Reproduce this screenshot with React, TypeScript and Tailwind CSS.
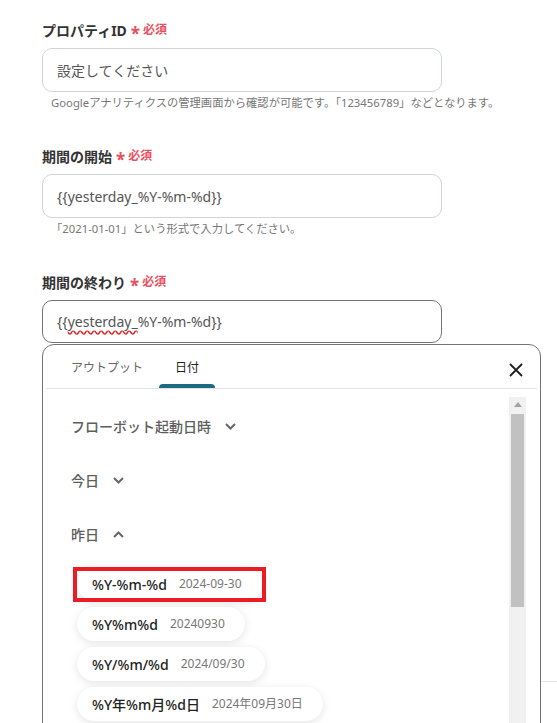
import React from "react";

const font = "font-['Noto_Sans','Noto_Sans_CJK_JP',sans-serif]";

function Required() {
  return (
    <span className="ml-[4px] inline-flex items-center text-[#e9505e]">
      <span className="text-[17px] font-bold leading-none translate-y-[3px]">*</span>
      <span className="ml-[3px] text-[12px] font-bold">必須</span>
    </span>
  );
}

function Label({ children }: { children: React.ReactNode }) {
  return (
    <div className="flex items-center h-[20px] text-[14px] font-bold text-[#333]">
      {children}
      <Required />
    </div>
  );
}

function Chevron({ up = false }: { up?: boolean }) {
  return (
    <svg width="11" height="7" viewBox="0 0 11 7" className="ml-[14px]">
      <polyline
        points={up ? "1,6 5.5,1.5 10,6" : "1,1 5.5,5.5 10,1"}
        fill="none"
        stroke="#666"
        strokeWidth="2"
      />
    </svg>
  );
}

const formats = [
  { f: "%Y-%m-%d", v: "2024-09-30" },
  { f: "%Y%m%d", v: "20240930" },
  { f: "%Y/%m/%d", v: "2024/09/30" },
  { f: "%Y年%m月%d日", v: "2024年09月30日" },
];

function Pill({ f, v, marked }: { f: string; v: string; marked?: boolean }) {
  return (
    <div className="relative self-start">
      <div className="flex items-center h-[34px] pl-[15px] pr-[20px] rounded-full bg-white shadow-[0_2px_8px_rgba(0,0,0,0.11)]">
        <span className="text-[14px] font-medium text-[#222]">{f}</span>
        <span className="ml-[12px] text-[12px] text-[#777]">{v}</span>
      </div>
      {marked && (
        <div className="absolute left-[-4px] top-[0px] w-[193px] h-[35px] border-[4px] border-[#ec1c24]" />
      )}
    </div>
  );
}

function DatePanel() {
  return (
    <div className="absolute left-0 top-full mt-[1px] w-[499px] h-[400px] bg-white border border-[#747474] rounded-t-[12px] flex flex-col">
      <div className="flex items-stretch h-[43px] pl-[12px] pr-[16px]">
        <div className="flex flex-col px-4">
          <div className="flex-1 flex items-center pt-[6px] text-[12px] text-[#666]">アウトプット</div>
          <div className="h-[4px]" />
        </div>
        <div className="flex flex-col w-[56px]">
          <div className="flex-1 flex items-center justify-center pt-[6px] text-[12px] text-[#222]">日付</div>
          <div className="h-[4px] rounded-t-[4px] bg-[#1c6b80]" />
        </div>
        <div className="ml-auto flex items-center pt-[6px] pr-[1px]">
          <svg width="14" height="14" viewBox="0 0 14 14">
            <path d="M1 1 L13 13 M13 1 L1 13" stroke="#1f1f1f" strokeWidth="1.8" />
          </svg>
        </div>
      </div>
      <div className="mx-[3px] h-px bg-[#e2e2e2]" />
      <div className="flex flex-1 min-h-0">
        <div className="flex-1 flex flex-col pl-[28px] pt-[10px]">
          {[
            { t: "フローボット起動日時", up: false },
            { t: "今日", up: false },
            { t: "昨日", up: true },
          ].map((h) => (
            <div key={h.t} className="flex items-center h-[54px] text-[14px] font-medium text-[#5e5e5e]">
              {h.t}
              <Chevron up={h.up} />
            </div>
          ))}
          <div className="flex flex-col gap-[6px] pt-[6px] pl-[6px]">
            {formats.map((x, i) => (
              <Pill key={x.f} f={x.f} v={x.v} marked={i === 0} />
            ))}
          </div>
        </div>
        <div className="w-[17px] mr-[14px] mt-[8px] bg-[#f1f1f1] flex flex-col items-center">
          <svg width="8" height="5" viewBox="0 0 8 5" className="mt-[5px]">
            <polygon points="0,5 4,0 8,5" fill="#a3a3a3" />
          </svg>
          <div className="mt-[7px] w-[13px] h-[193px] bg-[#c1c1c1]" />
        </div>
      </div>
    </div>
  );
}

export default function App() {
  return (
    <div className={`${font} relative w-[557px] h-[723px] overflow-hidden bg-white`}>
      <div className="pl-[42px] pt-[20px]">
        <Label>プロパティID</Label>
        <div className="mt-[8px] w-[400px] h-[44px] rounded-[10px] border border-[#cfd5de] flex items-center px-[14px] text-[14px] text-[#555]">
          設定してください
        </div>
        <div className="mt-[3px] pl-[9px] h-[16px] leading-[16px] text-[11.3px] text-[#777]">
          Googleアナリティクスの管理画面から確認が可能です。「123456789」などとなります。
        </div>

        <div className="mt-[35px]">
          <Label>期間の開始</Label>
        </div>
        <div className="mt-[8px] w-[400px] h-[44px] rounded-[10px] border border-[#cfd5de] flex items-center px-[14px] text-[14px] text-[#555]">
          {"{{yesterday_%Y-%m-%d}}"}
        </div>
        <div className="mt-[3px] pl-[9px] h-[16px] leading-[16px] text-[11.3px] text-[#777]">
          「2021-01-01」という形式で入力してください。
        </div>

        <div className="mt-[35px]">
          <Label>期間の終わり</Label>
        </div>
        <div className="relative mt-[8px] w-[400px]">
          <div className="h-[43px] rounded-[10px] border border-[#747474] flex items-center px-[14px] text-[14px] text-[#555]">
            {"{{"}
            <span className="underline decoration-wavy decoration-[#e02020] underline-offset-[3px]">yesterday_</span>
            {"%Y-%m-%d}}"}
          </div>
          <DatePanel />
        </div>
      </div>
      <div className="mt-[338px] ml-[470px] h-px bg-[#e5e5e5]" />
    </div>
  );
}
